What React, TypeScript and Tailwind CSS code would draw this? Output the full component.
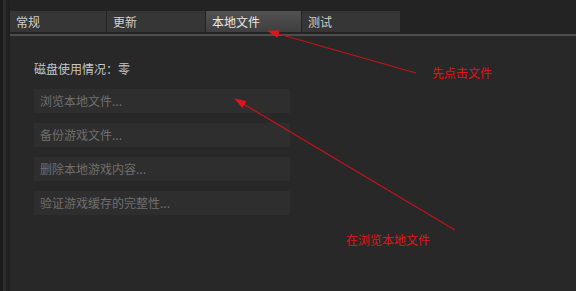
import React from 'react';

const tabs = [
  { name: '常规', active: false, w: 'w-[96px]' },
  { name: '更新', active: false, w: 'w-[98px]' },
  { name: '本地文件', active: true, w: 'w-[95px]' },
  { name: '测试', active: false, w: 'w-[98px]' },
];

const actions = ['浏览本地文件...', '备份游戏文件...', '删除本地游戏内容...', '验证游戏缓存的完整性...'];

export default function App() {
  return (
    <div
      className="relative w-[576px] h-[291px] overflow-hidden bg-[#232323] text-[12px]"
      style={{ fontFamily: '"Noto Sans CJK SC", "Noto Sans", sans-serif' }}
    >
      <div className="flex h-full">
        {/* left edge */}
        <div className="flex w-[10px] shrink-0">
          <div className="w-[3px] bg-[#1b1b1b]" />
          <div className="w-[3px] bg-[#2c2c2c]" />
          <div className="w-[4px] bg-[#202020]" />
        </div>

        <div className="flex flex-1 flex-col">
          <div className="h-[11px]" />

          {/* tabs */}
          <div className="flex h-[21px] gap-px">
            {tabs.map((t) => (
              <div
                key={t.name}
                className={
                  t.active
                    ? `${t.w} flex items-center pl-[6px] bg-gradient-to-b from-[#525252] to-[#3f3f3f] text-[#e8e8e8]`
                    : `${t.w} flex items-center pl-[6px] bg-[#363636] text-[#cfcfcf]`
                }
              >
                {t.name}
              </div>
            ))}
          </div>
          <div className="h-[2px]" />
          <div className="h-[2px] bg-[#4e4e4e]" />

          {/* content */}
          <div className="flex-1 bg-[#282828] pl-[24px] pt-[25px]">
            <div className="text-[#c6c6c6] leading-[16px]">磁盘使用情况：零</div>
            <div className="mt-[12px] flex flex-col gap-[10px] w-[256px]">
              {actions.map((a) => (
                <div key={a} className="h-[24px] flex items-center pl-[6px] bg-[#2e2e2e] text-[#6f6f6f]">
                  {a}
                </div>
              ))}
            </div>
          </div>
        </div>
      </div>

      {/* annotations */}
      <svg className="absolute inset-0" width="576" height="291">
        <defs>
          <marker id="ah" markerWidth="12" markerHeight="8" refX="11" refY="4" orient="auto" markerUnits="userSpaceOnUse">
            <path d="M0,0 L12,4 L0,8 Z" fill="#e0141a" />
          </marker>
        </defs>
        <line x1="416" y1="73" x2="268" y2="31" stroke="#c0141a" strokeWidth="1.2" markerEnd="url(#ah)" />
        <line x1="455" y1="230" x2="235" y2="99" stroke="#c0141a" strokeWidth="1.2" markerEnd="url(#ah)" />
      </svg>
      <div className="absolute left-[432px] top-[64px] text-[#e0141a] text-[12px]">先点击文件</div>
      <div className="absolute left-[346px] top-[231px] text-[#e0141a] text-[12px]">在浏览本地文件</div>
    </div>
  );
}
